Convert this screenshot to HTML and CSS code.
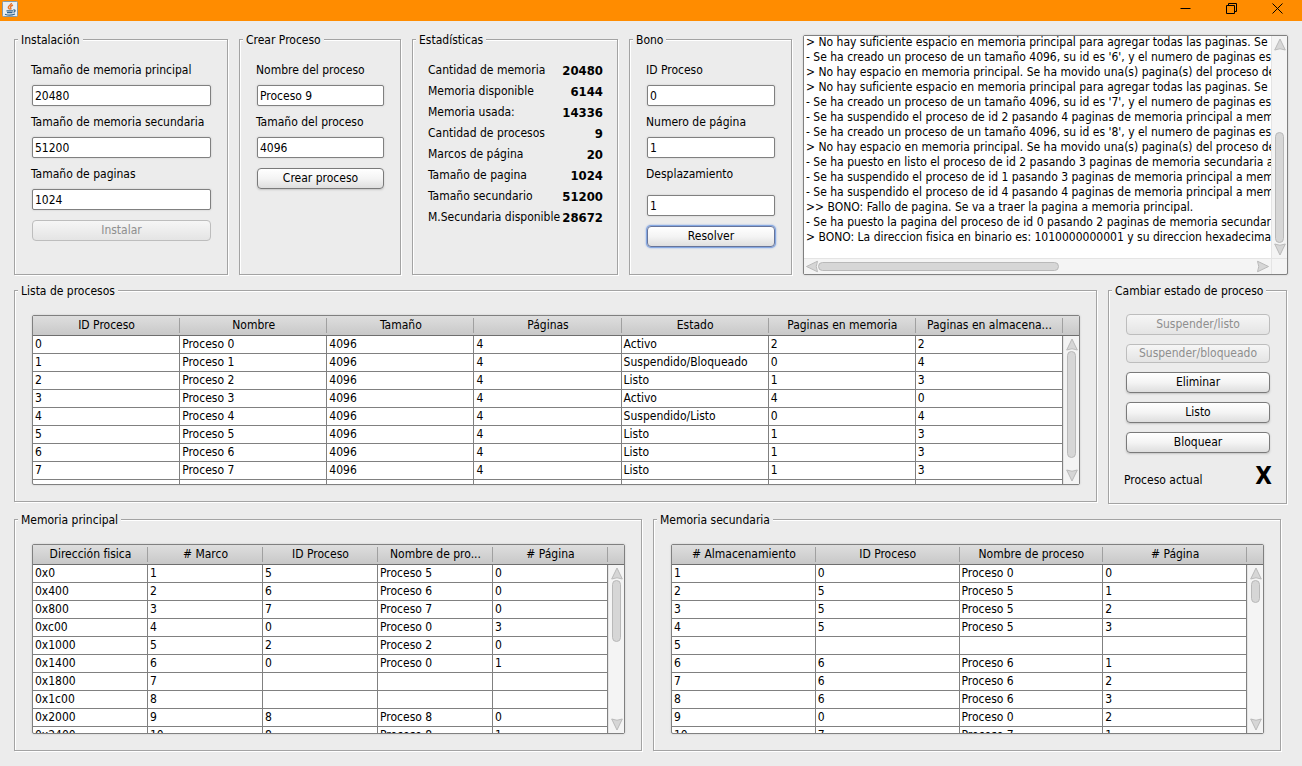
FILE: index.html
```html
<!DOCTYPE html>
<html lang="es">
<head>
<meta charset="utf-8">
<title>Memoria</title>
<link rel="stylesheet" href="styles.css">
</head>
<body>
<svg class="defs" aria-hidden="true">
  <symbol id="arrow" viewBox="0 0 12 13"><path d="M6 1L11.300 12Q6 9.500.7 12Z" fill="#d6d6d6" stroke="#b9b9b9"/></symbol>
</svg>
<header class="titlebar">
  <svg class="java" viewBox="0 0 16 16" aria-hidden="true">
    <rect x=".5" y=".5" width="15" height="15" rx="1" fill="#e9eef2" stroke="#8299aa"/>
    <path d="M9.500 2C9.500 4 6 4.500 6.300 6.500 6.500 7.300 7.500 7.700 7.700 8.500M11 4C8.500 5 8 6 8.800 7.200 9.200 7.800 8.800 8.300 8.500 8.700" fill="none" stroke="#e8762c" stroke-width="1.400"/>
    <path d="M4.500 9.800H11M5 11.600H10.500M3 13.200C5.500 14.300 10 14.300 13 13M11.300 9C13.800 8.600 13.600 10.800 11.500 11.300" fill="none" stroke="#33658e" stroke-width="1.200"/>
  </svg>
  <div class="controls">
    <button class="win" aria-label="Minimizar"><svg viewBox="0 0 11 11"><path d="M.5 5.500H10.500"/></svg></button>
    <button class="win" aria-label="Restaurar"><svg viewBox="0 0 11 11"><path d="M.5 2.500H8.500V10.500H.5ZM2.500 2.500V.5H10.500V8.500H8.500"/></svg></button>
    <button class="win" aria-label="Cerrar"><svg viewBox="0 0 11 11"><path d="M.5.5L10.500 10.500M10.500.5L.5 10.500"/></svg></button>
  </div>
</header>
<main>
  <div class="row row-top">
    <fieldset class="form">
      <legend>Instalación</legend>
      <label for="mp">Tamaño de memoria principal</label>
      <input id="mp" value="20480">
      <label for="ms">Tamaño de memoria secundaria</label>
      <input id="ms" value="51200">
      <label for="tp">Tamaño de paginas</label>
      <input id="tp" value="1024">
      <button class="btn" disabled>Instalar</button>
    </fieldset>
    <fieldset class="form">
      <legend>Crear Proceso</legend>
      <label for="np">Nombre del proceso</label>
      <input id="np" value="Proceso 9">
      <label for="tpr">Tamaño del proceso</label>
      <input id="tpr" value="4096">
      <button class="btn">Crear proceso</button>
    </fieldset>
    <fieldset class="stats">
      <legend>Estadísticas</legend>
      <dl>
        <dt>Cantidad de memoria</dt><dd>20480</dd>
        <dt>Memoria disponible</dt><dd>6144</dd>
        <dt>Memoria usada:</dt><dd>14336</dd>
        <dt>Cantidad de procesos</dt><dd>9</dd>
        <dt>Marcos de página</dt><dd>20</dd>
        <dt>Tamaño de pagina</dt><dd>1024</dd>
        <dt>Tamaño secundario</dt><dd>51200</dd>
        <dt>M.Secundaria disponible</dt><dd>28672</dd>
      </dl>
    </fieldset>
    <fieldset class="form">
      <legend>Bono</legend>
      <label for="idp">ID Proceso</label>
      <input id="idp" value="0">
      <label for="nump">Numero de página</label>
      <input id="nump" value="1">
      <label class="tall" for="des">Desplazamiento</label>
      <input id="des" value="1">
      <button class="btn focused">Resolver</button>
    </fieldset>
    <div class="log">
      <div class="log-view"><textarea readonly wrap="off" aria-label="Registro">&gt; No hay suficiente espacio en memoria principal para agregar todas las paginas. Se ha
- Se ha creado un proceso de un tamaño 4096, su id es '6', y el numero de paginas es
&gt; No hay espacio en memoria principal. Se ha movido una(s) pagina(s) del proceso de
&gt; No hay suficiente espacio en memoria principal para agregar todas las paginas. Se ha
- Se ha creado un proceso de un tamaño 4096, su id es '7', y el numero de paginas es
- Se ha suspendido el proceso de id 2 pasando 4 paginas de memoria principal a memoria
- Se ha creado un proceso de un tamaño 4096, su id es '8', y el numero de paginas es
&gt; No hay espacio en memoria principal. Se ha movido una(s) pagina(s) del proceso de
- Se ha puesto en listo el proceso de id 2 pasando 3 paginas de memoria secundaria a
- Se ha suspendido el proceso de id 1 pasando 3 paginas de memoria principal a memoria
- Se ha suspendido el proceso de id 4 pasando 4 paginas de memoria principal a memoria
&gt;&gt; BONO: Fallo de pagina. Se va a traer la pagina a memoria principal.
- Se ha puesto la pagina del proceso de id 0 pasando 2 paginas de memoria secundaria
&gt; BONO: La direccion fisica en binario es: 1010000000001 y su direccion hexadecimal</textarea></div>
      <div class="bar"><svg class="arrow"><use href="#arrow"/></svg><div class="track end"><div class="thumb" style="height:58%"></div></div><svg class="arrow down"><use href="#arrow"/></svg></div>
      <div class="bar horizontal"><svg class="arrow left"><use href="#arrow"/></svg><div class="track"><div class="thumb" style="width:55%"></div></div><svg class="arrow right"><use href="#arrow"/></svg></div>
      <div class="corner"></div>
    </div>
  </div>

  <div class="row row-mid">
    <fieldset class="list">
      <legend>Lista de procesos</legend>
      <div class="grid-box short">
        <div class="view">
          <table>
            <thead><tr><th>ID Proceso</th><th>Nombre</th><th>Tamaño</th><th>Páginas</th><th>Estado</th><th>Paginas en memoria</th><th>Paginas en almacena...</th></tr></thead>
            <tbody>
              <tr><td>0</td><td>Proceso 0</td><td>4096</td><td>4</td><td>Activo</td><td>2</td><td>2</td></tr>
              <tr><td>1</td><td>Proceso 1</td><td>4096</td><td>4</td><td>Suspendido/Bloqueado</td><td>0</td><td>4</td></tr>
              <tr><td>2</td><td>Proceso 2</td><td>4096</td><td>4</td><td>Listo</td><td>1</td><td>3</td></tr>
              <tr><td>3</td><td>Proceso 3</td><td>4096</td><td>4</td><td>Activo</td><td>4</td><td>0</td></tr>
              <tr><td>4</td><td>Proceso 4</td><td>4096</td><td>4</td><td>Suspendido/Listo</td><td>0</td><td>4</td></tr>
              <tr><td>5</td><td>Proceso 5</td><td>4096</td><td>4</td><td>Listo</td><td>1</td><td>3</td></tr>
              <tr><td>6</td><td>Proceso 6</td><td>4096</td><td>4</td><td>Listo</td><td>1</td><td>3</td></tr>
              <tr><td>7</td><td>Proceso 7</td><td>4096</td><td>4</td><td>Listo</td><td>1</td><td>3</td></tr>
              <tr><td></td><td></td><td></td><td></td><td></td><td></td><td></td></tr>
            </tbody>
          </table>
        </div>
        <div class="side"><div class="stub"></div><div class="bar"><svg class="arrow"><use href="#arrow"/></svg><div class="track"><div class="thumb" style="height:91%"></div></div><svg class="arrow down"><use href="#arrow"/></svg></div></div>
      </div>
    </fieldset>
    <fieldset class="state">
      <legend>Cambiar estado de proceso</legend>
      <button class="btn" disabled>Suspender/listo</button>
      <button class="btn" disabled>Suspender/bloqueado</button>
      <button class="btn">Eliminar</button>
      <button class="btn">Listo</button>
      <button class="btn">Bloquear</button>
      <div class="current"><span>Proceso actual</span><strong>X</strong></div>
    </fieldset>
  </div>

  <div class="row row-bottom">
    <fieldset class="list">
      <legend>Memoria principal</legend>
      <div class="grid-box">
        <div class="view">
          <table>
            <thead><tr><th>Dirección fisica</th><th># Marco</th><th>ID Proceso</th><th>Nombre de pro...</th><th># Página</th></tr></thead>
            <tbody>
              <tr><td>0x0</td><td>1</td><td>5</td><td>Proceso 5</td><td>0</td></tr>
              <tr><td>0x400</td><td>2</td><td>6</td><td>Proceso 6</td><td>0</td></tr>
              <tr><td>0x800</td><td>3</td><td>7</td><td>Proceso 7</td><td>0</td></tr>
              <tr><td>0xc00</td><td>4</td><td>0</td><td>Proceso 0</td><td>3</td></tr>
              <tr><td>0x1000</td><td>5</td><td>2</td><td>Proceso 2</td><td>0</td></tr>
              <tr><td>0x1400</td><td>6</td><td>0</td><td>Proceso 0</td><td>1</td></tr>
              <tr><td>0x1800</td><td>7</td><td></td><td></td><td></td></tr>
              <tr><td>0x1c00</td><td>8</td><td></td><td></td><td></td></tr>
              <tr><td>0x2000</td><td>9</td><td>8</td><td>Proceso 8</td><td>0</td></tr>
              <tr><td>0x2400</td><td>10</td><td>8</td><td>Proceso 8</td><td>1</td></tr>
            </tbody>
          </table>
        </div>
        <div class="side"><div class="stub"></div><div class="bar"><svg class="arrow"><use href="#arrow"/></svg><div class="track"><div class="thumb" style="height:45%"></div></div><svg class="arrow down"><use href="#arrow"/></svg></div></div>
      </div>
    </fieldset>
    <fieldset class="list">
      <legend>Memoria secundaria</legend>
      <div class="grid-box">
        <div class="view">
          <table>
            <thead><tr><th># Almacenamiento</th><th>ID Proceso</th><th>Nombre de proceso</th><th># Página</th></tr></thead>
            <tbody>
              <tr><td>1</td><td>0</td><td>Proceso 0</td><td>0</td></tr>
              <tr><td>2</td><td>5</td><td>Proceso 5</td><td>1</td></tr>
              <tr><td>3</td><td>5</td><td>Proceso 5</td><td>2</td></tr>
              <tr><td>4</td><td>5</td><td>Proceso 5</td><td>3</td></tr>
              <tr><td>5</td><td></td><td></td><td></td></tr>
              <tr><td>6</td><td>6</td><td>Proceso 6</td><td>1</td></tr>
              <tr><td>7</td><td>6</td><td>Proceso 6</td><td>2</td></tr>
              <tr><td>8</td><td>6</td><td>Proceso 6</td><td>3</td></tr>
              <tr><td>9</td><td>0</td><td>Proceso 0</td><td>2</td></tr>
              <tr><td>10</td><td>7</td><td>Proceso 7</td><td>1</td></tr>
            </tbody>
          </table>
        </div>
        <div class="side"><div class="stub"></div><div class="bar"><svg class="arrow"><use href="#arrow"/></svg><div class="track"><div class="thumb" style="height:17%"></div></div><svg class="arrow down"><use href="#arrow"/></svg></div></div>
      </div>
    </fieldset>
  </div>
</main>
</body>
</html>
```

FILE: styles.css
```css
* { box-sizing: border-box; }

body {
  margin: 0;
  min-height: 100vh;
  background: #ececec;
  color: #000;
  font: 12px/15px "DejaVu Sans Condensed", Tahoma, "Noto Sans", sans-serif;
}

button, input, textarea { font: inherit; color: inherit; margin: 0; }

.defs { display: none; }

/* Title bar */
.titlebar {
  display: flex;
  align-items: flex-start;
  justify-content: space-between;
  height: 21px;
  padding: 1px 2px 0;
  background: #ff8c00;
}
.java { width: 16px; height: 16px; }
.controls { display: flex; }
.win {
  display: grid;
  place-items: center;
  width: 46px;
  height: 15px;
  padding: 0;
  border: 0;
  background: none;
}
.win svg { width: 11px; height: 11px; fill: none; stroke: #000; }

/* Rows of panels */
main { padding-top: 10px; }
.row { display: grid; gap: 11px; }
.row-top { grid-template-columns: 214px 162px 206px 163px minmax(0, 1fr); padding: 0 14px; }
.row-mid { grid-template-columns: minmax(0, 1fr) 179px; align-items: start; padding: 7px 15px 0 14px; }
.row-bottom { grid-template-columns: repeat(2, minmax(0, 1fr)); padding: 7px 21px 15px 14px; }

fieldset {
  min-width: 0;
  margin: 0;
  border: 1px solid #a3a3a3;
  box-shadow: 1px 1px 0 #fff, inset 1px 1px 0 #fff;
}
legend {
  margin-left: -14px;
  padding: 2px 3px 0;
  background: #ececec;
  white-space: nowrap;
}

/* Forms */
.form { padding: 14px 16px 27px 17px; }
.form label { display: block; margin-left: -1px; padding-bottom: 7px; line-height: 16px; }
.form label.tall { padding-bottom: 13px; }
.form input {
  display: block;
  width: 100%;
  height: 21px;
  margin-bottom: 8px;
  padding: 0 2px;
  border: 1px solid #808080;
  border-radius: 2px;
  background: #fff;
  box-shadow: 0 0 2px #c0c0c0;
}
.btn {
  display: block;
  width: 100%;
  height: 21px;
  padding: 0;
  border: 1px solid #7a7a7a;
  border-radius: 4px;
  background: linear-gradient(#fff, #f4f4f4 50%, #dedede);
  box-shadow: 0 1px 2px #c4c4c4;
}
.form .btn { margin-top: 10px; }
.btn:disabled { border-color: #bdbdbd; color: #8e8e8e; background: linear-gradient(#f6f6f6, #e4e4e4); box-shadow: none; }
.btn.focused { border-color: #66749a; box-shadow: 0 0 0 1px #86a8e2, 0 0 2px 1px #86a8e2; }

.stats { padding: 12px 14px 0 17px; }
.stats dl { display: grid; grid-template-columns: 1fr auto; margin: 0 0 0 -2px; line-height: 21px; }
.stats dt { white-space: nowrap; }
.stats dd { margin: 0; font-size: 13px; font-weight: bold; text-align: right; }

/* Log */
.log {
  display: grid;
  grid-template: minmax(0, 1fr) 16px / minmax(0, 1fr) 16px;
  height: 240px;
  margin-top: 4px;
  border: 1px solid #808080;
  border-radius: 2px;
  background: #f4f4f4;
  box-shadow: 0 0 2px #c0c0c0;
}
.log-view { overflow: hidden; background: #fff; }
.log textarea {
  display: block;
  width: 100%;
  height: 100%;
  margin-top: -1px;
  padding: 0 0 0 2px;
  border: 0;
  outline: 0;
  resize: none;
  overflow: hidden;
  background: none;
}
.corner { border: 1px solid #e4e4e4; border-width: 1px 0 0 1px; }

/* Scroll bars */
.bar {
  display: flex;
  flex: 1;
  flex-direction: column;
  align-items: center;
  min-height: 0;
  padding: 2px 0;
  border-left: 1px solid #e4e4e4;
  background: #f4f4f4;
}
.arrow { flex: none; width: 12px; height: 13px; }
.down { transform: rotate(180deg); }
.left { transform: rotate(-90deg); }
.right { transform: rotate(90deg); }
.track { display: flex; flex: 1; flex-direction: column; min-height: 0; }
.track.end { justify-content: flex-end; }
.thumb { width: 9px; border: 1px solid #b9b9b9; border-radius: 5px; background: #d6d6d6; }
.horizontal { flex-direction: row; padding: 0 2px; border-left: 0; border-top: 1px solid #e4e4e4; }
.horizontal .track { flex-direction: row; }
.horizontal .thumb { height: 9px; }

/* Tables */
.list { padding: 16px 16px 16px 17px; }
.grid-box {
  display: grid;
  grid-template-columns: minmax(0, 1fr) 16px;
  height: 190px;
  border: 1px solid #808080;
  border-radius: 2px;
  background: #fff;
  box-shadow: 0 0 2px #c0c0c0;
}
.grid-box.short { height: 170px; }
.view { overflow: hidden; }
.side { display: flex; flex-direction: column; min-height: 0; }
.stub { height: 20px; border-bottom: 1px solid #6e6e6e; background: linear-gradient(#dedede, #c8c8c8); }
table { width: 100%; table-layout: fixed; border-collapse: separate; border-spacing: 0; }
th {
  height: 20px;
  padding: 0;
  border-bottom: 1px solid #6e6e6e;
  background: linear-gradient(#a0a0a0, #a0a0a0) right 2px / 1px 15px no-repeat, linear-gradient(#dedede, #c8c8c8);
  font-weight: normal;
  white-space: nowrap;
}
td {
  height: 18px;
  padding: 0 2px;
  border: 1px solid #808080;
  border-width: 0 1px 1px 0;
  white-space: nowrap;
}

/* Process state */
.state { padding: 15px 16px 14px 17px; }
.state .btn { margin-bottom: 9px; }
.state .btn:nth-of-type(2) { height: 19px; }
.current { display: flex; align-items: baseline; justify-content: space-between; margin: 0 -2px; padding-top: 1px; }
.current strong { font-size: 24px; line-height: 26px; }
```
